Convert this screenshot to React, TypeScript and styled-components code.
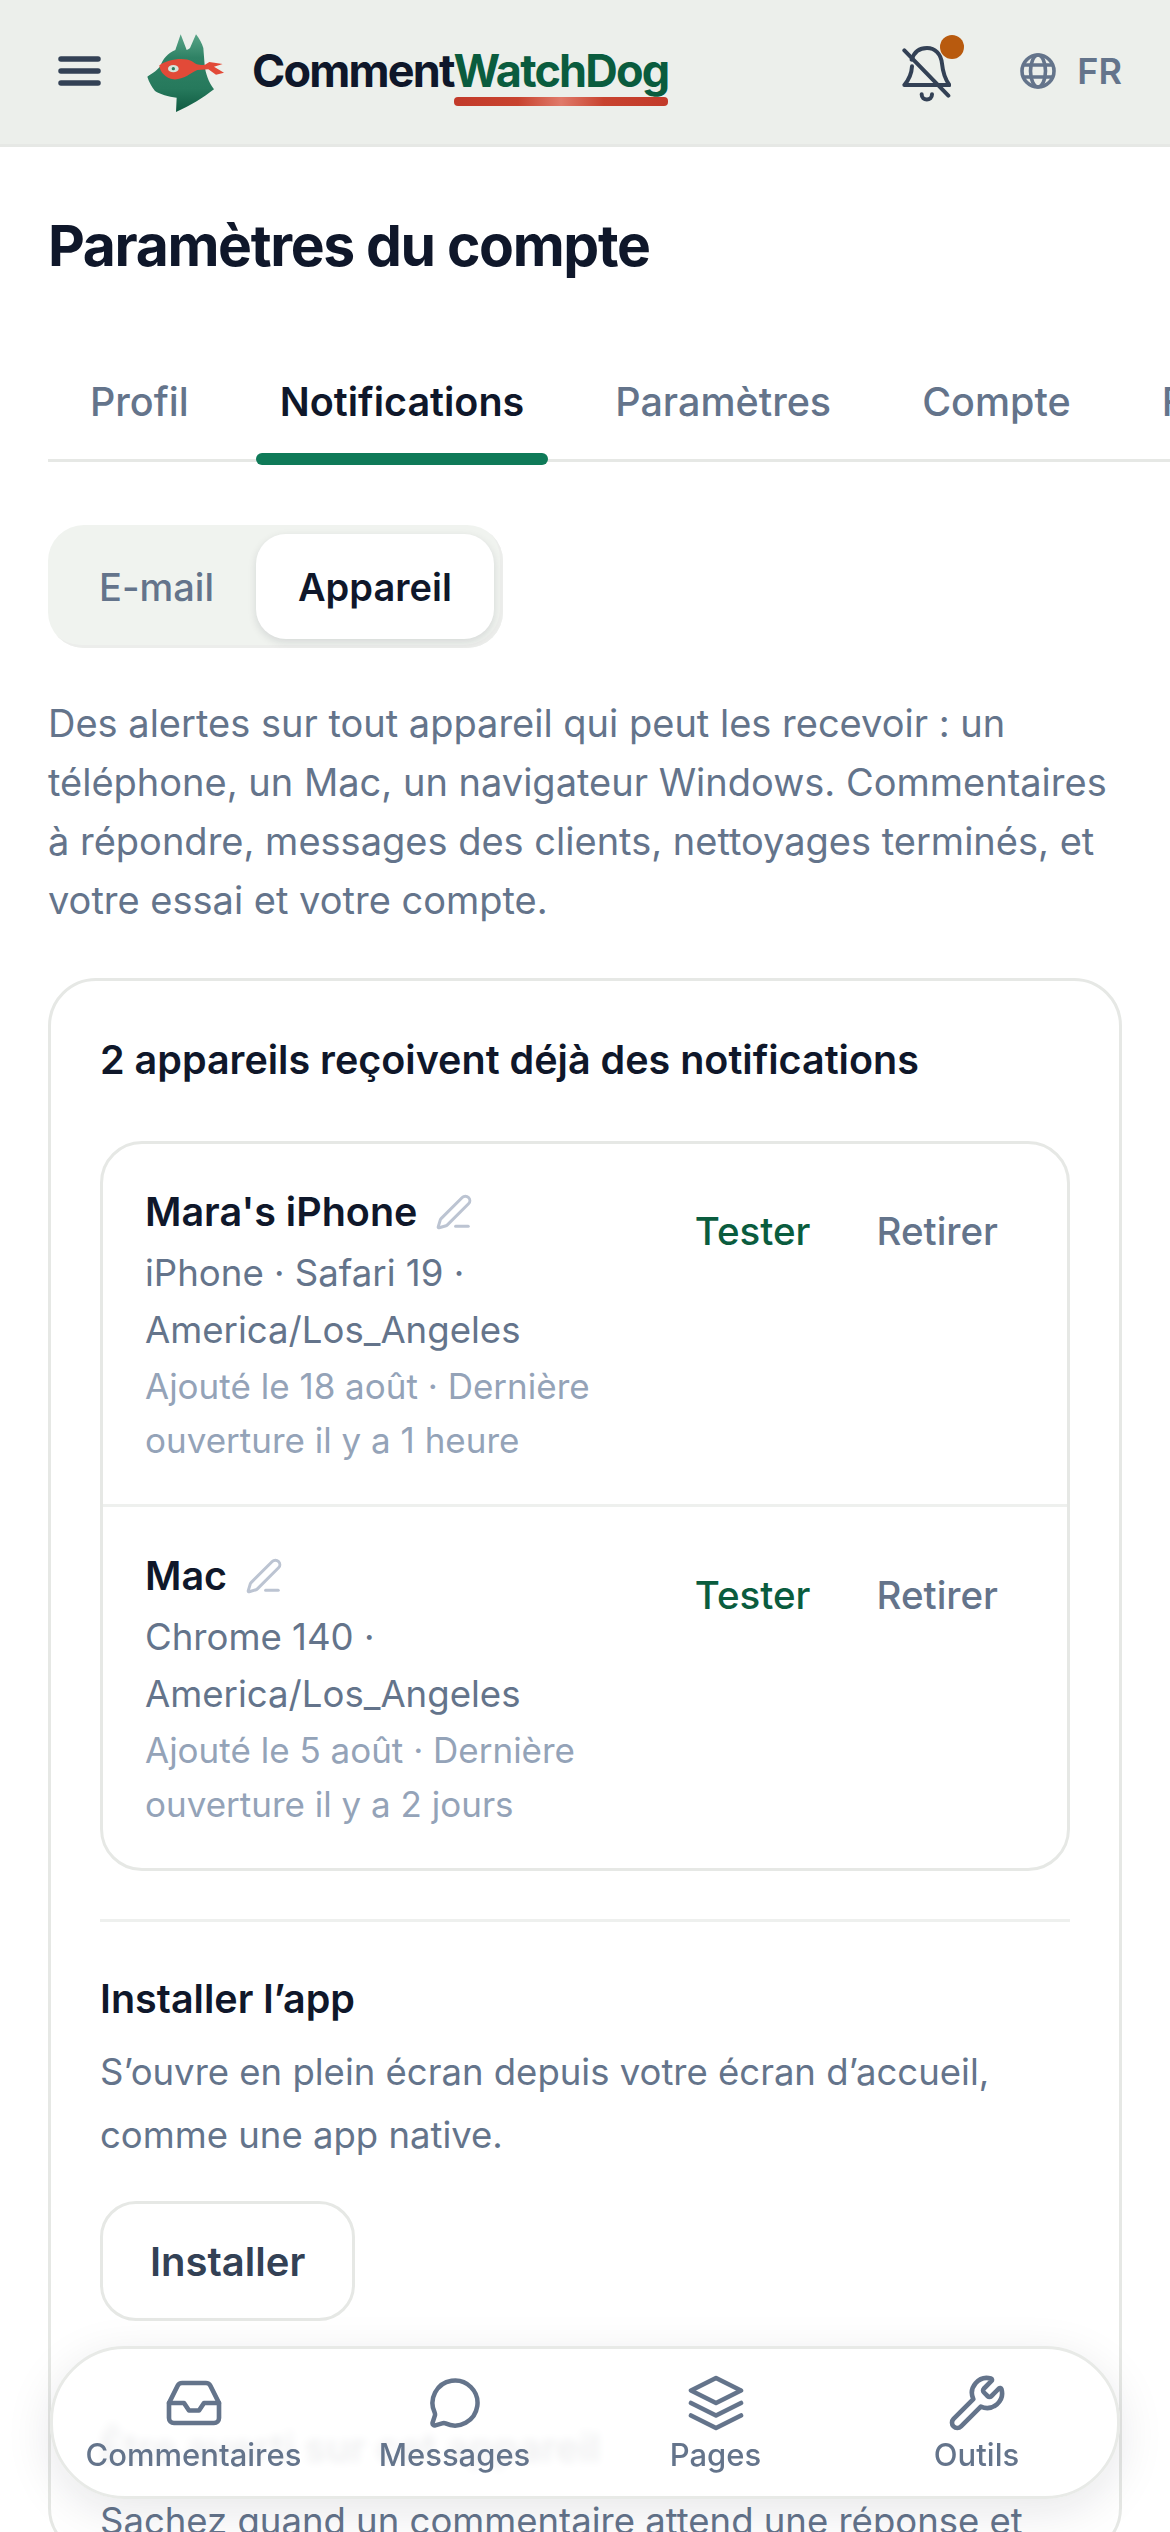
import React from 'react';
import styled, { createGlobalStyle } from 'styled-components';
import { Inbox, MessageCircle, PenLine, Wrench } from 'lucide-react';

const GlobalStyle = createGlobalStyle`
  html, body {
    margin: 0;
    padding: 0;
    background: #fff;
  }
  * {
    box-sizing: border-box;
  }
  body {
    font-family: Inter, "Noto Sans", sans-serif;
    color: #0f172a;
  }
`;

const Page = styled.div`
  position: relative;
  width: 1170px;
  height: 2532px;
  overflow: hidden;
  background: #fff;
`;

const Header = styled.header`
  height: 147px;
  display: flex;
  align-items: center;
  padding: 0 48px 3px 58px;
  background: #ecefeb;
  border-bottom: 3px solid #e6e8e5;
`;

const MenuButton = styled.svg`
  flex: none;
  width: 43px;
  height: 30px;
  margin-right: 39px;
  color: #334155;
`;

const Logo = styled.svg`
  flex: none;
  width: 100px;
  height: 90px;
`;

const Wordmark = styled.span`
  margin-left: 12px;
  font-size: 45px;
  line-height: 54px;
  font-weight: 700;
  letter-spacing: -1.8px;
  color: #0f172a;
`;

const WordmarkAccent = styled.span`
  position: relative;
  color: #0a5c3e;

  &::after {
    content: '';
    position: absolute;
    left: 0;
    right: 0;
    bottom: -8px;
    height: 9px;
    border-radius: 4px;
    background: linear-gradient(90deg, #c23a2a 0%, #c8432f 30%, #e07a6a 50%, #c8432f 70%, #c23a2a 100%);
  }
`;

const HeaderActions = styled.div`
  margin-left: auto;
  display: flex;
  align-items: center;
`;

const BellButton = styled.span`
  position: relative;
  display: flex;
  margin: 5px 69px 0 0;
  color: #334155;
`;

const BellDot = styled.span`
  position: absolute;
  top: -8px;
  left: 39px;
  width: 24px;
  height: 24px;
  border-radius: 50%;
  background: #b85a0e;
`;

const Language = styled.span`
  display: flex;
  align-items: center;
  gap: 21px;
  color: #64748b;
  font-size: 36px;
  font-weight: 600;
`;

const Main = styled.main`
  padding: 0 48px;
`;

const Title = styled.h1`
  margin: 63px 0 0;
  font-size: 57px;
  line-height: 72px;
  font-weight: 700;
  letter-spacing: -1.35px;
  color: #0f172a;
`;

const Tabs = styled.nav`
  display: flex;
  gap: 43px;
  margin: 77px -48px 0 0;
  padding-left: 18px;
  height: 103px;
  border-bottom: 3px solid #e6e8e5;
`;

const Tab = styled.span<{ $active?: boolean }>`
  position: relative;
  flex: none;
  padding: 18px 24px 0;
  font-size: 39.5px;
  line-height: 51px;
  font-weight: ${(props) => (props.$active ? 600 : 500)};
  color: ${(props) => (props.$active ? '#0f172a' : '#64748b')};
`;

const TabMarker = styled.span`
  position: absolute;
  left: 0;
  right: 0;
  bottom: -6px;
  height: 12px;
  border-radius: 6px;
  background: #0f7a58;
`;

const Segmented = styled.div`
  display: inline-flex;
  margin-top: 63px;
  padding: 9px;
  border-radius: 36px;
  background: #f0f3ef;
  box-shadow: inset -3px -3px 0 #ecedeb;
`;

const Segment = styled.span<{ $active?: boolean }>`
  padding: 0 42px;
  height: 105px;
  display: flex;
  align-items: center;
  border-radius: 30px;
  font-size: 38px;
  font-weight: ${(props) => (props.$active ? 600 : 500)};
  color: ${(props) => (props.$active ? '#0f172a' : '#64748b')};
  background: ${(props) => (props.$active ? '#fff' : 'transparent')};
  box-shadow: ${(props) => (props.$active ? '0 3px 9px rgba(15, 23, 42, 0.12)' : 'none')};
`;

const Intro = styled.p`
  margin: 46px 0 0;
  font-size: 38px;
  line-height: 59px;
  color: #64748b;
`;

const Card = styled.section`
  margin-top: 48px;
  padding: 52px 49px 0;
  border: 3px solid #e6e8e5;
  border-radius: 48px;
`;

const CardTitle = styled.h2`
  margin: 0;
  font-size: 39.5px;
  line-height: 54px;
  font-weight: 600;
  color: #0f172a;
`;

const DeviceList = styled.div`
  margin-top: 54px;
  border: 3px solid #e6e8e5;
  border-radius: 42px;
`;

const DeviceRow = styled.div`
  display: flex;
  padding: 41px 42px 37px;

  & + & {
    padding-top: 42px;
    border-top: 3px solid #eef0ee;
  }
`;

const DeviceInfo = styled.div`
  flex: 1;
  min-width: 0;
  padding-right: 40px;
`;

const DeviceName = styled.div`
  display: flex;
  align-items: center;
  gap: 18px;
  height: 54px;
  font-size: 39.5px;
  line-height: 54px;
  font-weight: 600;
  color: #0f172a;
`;

const RenameIcon = styled.span`
  display: flex;
  color: #bcc4d2;
`;

const DeviceMeta = styled.div`
  margin-top: 6px;
  font-size: 36.6px;
  line-height: 57px;
  color: #64748b;
`;

const DeviceSeen = styled.div`
  font-size: 35px;
  line-height: 54px;
  color: #94a3b8;
`;

const DeviceActions = styled.div`
  flex: none;
  display: flex;
  gap: 66px;
  padding-top: 19px;
  margin-right: 27px;
`;

const DeviceAction = styled.span<{ $primary?: boolean }>`
  font-size: 38.5px;
  line-height: 54px;
  font-weight: 500;
  color: ${(props) => (props.$primary ? '#0a5c3e' : '#64748b')};
`;

const Rule = styled.hr`
  margin: 48px 0 0;
  border: 0;
  border-top: 3px solid #eef0ee;
`;

const SectionTitle = styled.h3`
  margin: 50px 0 0;
  font-size: 39.5px;
  line-height: 54px;
  font-weight: 600;
  color: #0f172a;
`;

const SectionText = styled.p`
  margin: 15px 0 0;
  font-size: 36.5px;
  line-height: 63px;
  color: #64748b;
`;

const OutlineButton = styled.span`
  display: flex;
  align-items: center;
  width: fit-content;
  height: 120px;
  margin: 34px 0 100px;
  padding: 0 47px;
  border: 3px solid #e6e8e5;
  border-radius: 36px;
  font-size: 40px;
  font-weight: 600;
  color: #334155;
`;

const BottomNav = styled.nav`
  position: absolute;
  left: 50px;
  right: 50px;
  top: 2346px;
  height: 153px;
  display: grid;
  grid-template-columns: repeat(4, 1fr);
  padding: 0 10px;
  border: 3px solid #e8eae7;
  border-radius: 75px;
  background: rgba(255, 255, 255, 0.93);
  backdrop-filter: blur(4px);
  box-shadow: 0 12px 48px rgba(15, 23, 42, 0.1);
`;

const NavItem = styled.span`
  display: flex;
  flex-direction: column;
  align-items: center;
  padding-top: 21px;
  color: #64748b;
  font-size: 31px;
  line-height: 38px;
  font-weight: 500;
  white-space: nowrap;
`;

const NavIcon = styled.span`
  display: flex;
  align-items: center;
  justify-content: center;
  width: 66px;
  height: 66px;
`;

function DogLogo() {
  return (
    <Logo viewBox="0 0 300 270" aria-hidden="true">
      <defs>
        <linearGradient id="dogFill" x1="0" y1="0" x2="0" y2="1">
          <stop offset="0" stopColor="#58a487" />
          <stop offset="0.3" stopColor="#2f8265" />
          <stop offset="0.7" stopColor="#26795c" />
          <stop offset="1" stopColor="#0f5a41" />
        </linearGradient>
      </defs>
      <path
        d="M22 152 C38 142 54 132 62 118 C68 100 84 80 106 72 L122 25 L140 72 C145 70 148 68 150 66 L168 25 C178 38 186 52 190 66 L194 118 C196 140 206 170 222 190 C190 215 150 240 108 258 L110 215 C85 212 60 205 45 195 C35 182 27 168 22 152 Z"
        fill="url(#dogFill)"
      />
      <path
        d="M58 118 C80 102 130 92 156 106 C166 112 172 120 195 116 L208 108 L248 114 L222 122 L252 140 L228 146 L205 130 L172 132 C150 142 130 162 100 160 C78 157 60 140 58 118 Z"
        fill="#e24a38"
      />
      <ellipse cx="100" cy="128" rx="16" ry="11" fill="#d5e6dd" />
      <circle cx="100" cy="128" r="5" fill="#2c7a5e" />
    </Logo>
  );
}

export default function App() {
  return (
    <Page>
      <GlobalStyle />
      <Header>
        <MenuButton viewBox="0 0 43 30" aria-hidden="true">
          <path d="M3 3h37M3 15h37M3 27h37" fill="none" stroke="currentColor" strokeWidth="5.5" strokeLinecap="round" />
        </MenuButton>
        <DogLogo />
        <Wordmark>Comment<WordmarkAccent>WatchDog</WordmarkAccent></Wordmark>
        <HeaderActions>
          <BellButton>
            <svg width="50" height="60" viewBox="120 100 150 180" fill="none" stroke="currentColor" strokeWidth="12" strokeLinecap="round" strokeLinejoin="round" aria-hidden="true">
              <path d="M152 150 C160 125 178 115 198 115 C222 115 240 132 243 162 C246 192 255 212 265 226 L130 226 C145 208 152 192 153 170" />
              <path d="M130 122 L262 258" />
              <path d="M182 254 C182 275 213 275 213 254" />
            </svg>
            <BellDot />
          </BellButton>
          <Language>
            <svg width="36" height="36" viewBox="0 0 36 36" fill="none" stroke="currentColor" strokeWidth="3.6" aria-hidden="true">
              <circle cx="18" cy="18" r="16" />
              <ellipse cx="18" cy="18" rx="7.5" ry="16" />
              <path d="M3.5 12h29M3.5 24h29" />
            </svg>
            FR
          </Language>
        </HeaderActions>
      </Header>
      <Main>
        <Title>Paramètres du compte</Title>
        <Tabs>
          <Tab>Profil</Tab>
          <Tab $active>
            Notifications
            <TabMarker />
          </Tab>
          <Tab>Paramètres</Tab>
          <Tab>Compte</Tab>
          <Tab>Facturation</Tab>
        </Tabs>
        <Segmented>
          <Segment>E-mail</Segment>
          <Segment $active>Appareil</Segment>
        </Segmented>
        <Intro>
          Des alertes sur tout appareil qui peut les recevoir : un téléphone, un Mac, un navigateur Windows. Commentaires à répondre, messages des clients, nettoyages terminés, et votre essai et votre compte.
        </Intro>
        <Card>
          <CardTitle>2 appareils reçoivent déjà des notifications</CardTitle>
          <DeviceList>
            <DeviceRow>
              <DeviceInfo>
                <DeviceName>
                  Mara's iPhone
                  <RenameIcon><PenLine size={38} strokeWidth={1.9} /></RenameIcon>
                </DeviceName>
                <DeviceMeta>iPhone · Safari 19 · America/Los_Angeles</DeviceMeta>
                <DeviceSeen>Ajouté le 18 août · Dernière ouverture il y a 1 heure</DeviceSeen>
              </DeviceInfo>
              <DeviceActions>
                <DeviceAction $primary>Tester</DeviceAction>
                <DeviceAction>Retirer</DeviceAction>
              </DeviceActions>
            </DeviceRow>
            <DeviceRow>
              <DeviceInfo>
                <DeviceName>
                  Mac
                  <RenameIcon><PenLine size={38} strokeWidth={1.9} /></RenameIcon>
                </DeviceName>
                <DeviceMeta>Chrome 140 · America/Los_Angeles</DeviceMeta>
                <DeviceSeen>Ajouté le 5 août · Dernière ouverture il y a 2 jours</DeviceSeen>
              </DeviceInfo>
              <DeviceActions>
                <DeviceAction $primary>Tester</DeviceAction>
                <DeviceAction>Retirer</DeviceAction>
              </DeviceActions>
            </DeviceRow>
          </DeviceList>
          <Rule />
          <SectionTitle>Installer l’app</SectionTitle>
          <SectionText>S’ouvre en plein écran depuis votre écran d’accueil, comme une app native.</SectionText>
          <OutlineButton>Installer</OutlineButton>
          <SectionTitle>Être averti sur cet appareil</SectionTitle>
          <SectionText>Sachez quand un commentaire attend une réponse et</SectionText>
        </Card>
      </Main>
      <BottomNav>
        <NavItem>
          <NavIcon><Inbox size={60} strokeWidth={1.85} /></NavIcon>
          Commentaires
        </NavItem>
        <NavItem>
          <NavIcon><MessageCircle size={54} strokeWidth={2} /></NavIcon>
          Messages
        </NavItem>
        <NavItem>
          <NavIcon>
            <svg width="60" height="60" viewBox="0 0 24 24" fill="none" stroke="currentColor" strokeWidth="1.85" strokeLinecap="round" strokeLinejoin="round" aria-hidden="true">
              <path d="M12 2 2 7l10 5 10-5-10-5Z" />
              <path d="m2 12 10 5 10-5" />
              <path d="m2 17 10 5 10-5" />
            </svg>
          </NavIcon>
          Pages
        </NavItem>
        <NavItem>
          <NavIcon><Wrench size={60} strokeWidth={1.85} /></NavIcon>
          Outils
        </NavItem>
      </BottomNav>
    </Page>
  );
}
